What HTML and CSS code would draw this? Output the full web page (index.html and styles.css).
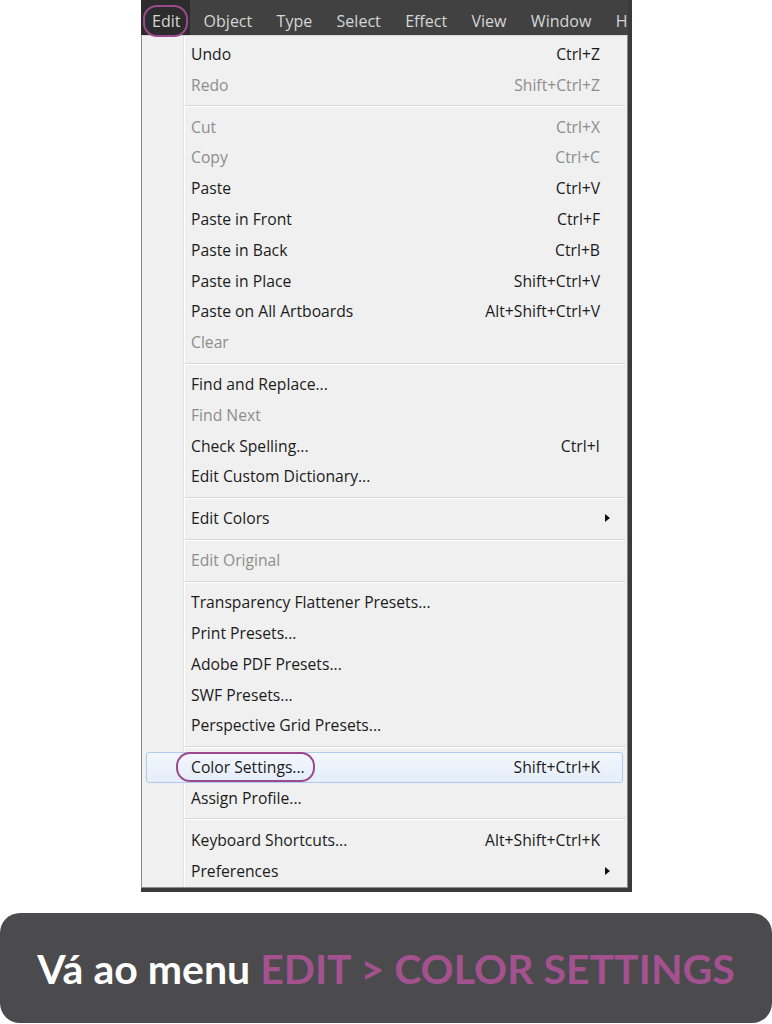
FILE: index.html
```html
<!DOCTYPE html>
<html>
<head>
    <meta charset="UTF-8">
    <title>Color Settings</title>
    <link rel="stylesheet" href="styles.css">
</head>
<body>
    <div class="shot">
        <div class="menubar">
            <span class="top-item active"><span class="ring">Edit</span></span>
            <span class="top-item">Object</span>
            <span class="top-item">Type</span>
            <span class="top-item">Select</span>
            <span class="top-item">Effect</span>
            <span class="top-item">View</span>
            <span class="top-item">Window</span>
            <span class="top-item">H</span>
        </div>

        <div class="menu">
            <div class="item"><span>Undo</span><span class="key">Ctrl+Z</span></div>
            <div class="item off"><span>Redo</span><span class="key">Shift+Ctrl+Z</span></div>
            <div class="sep"></div>
            <div class="item off"><span>Cut</span><span class="key">Ctrl+X</span></div>
            <div class="item off"><span>Copy</span><span class="key">Ctrl+C</span></div>
            <div class="item"><span>Paste</span><span class="key">Ctrl+V</span></div>
            <div class="item"><span>Paste in Front</span><span class="key">Ctrl+F</span></div>
            <div class="item"><span>Paste in Back</span><span class="key">Ctrl+B</span></div>
            <div class="item"><span>Paste in Place</span><span class="key">Shift+Ctrl+V</span></div>
            <div class="item"><span>Paste on All Artboards</span><span class="key">Alt+Shift+Ctrl+V</span></div>
            <div class="item off"><span>Clear</span></div>
            <div class="sep"></div>
            <div class="item"><span>Find and Replace...</span></div>
            <div class="item off"><span>Find Next</span></div>
            <div class="item"><span>Check Spelling...</span><span class="key">Ctrl+I</span></div>
            <div class="item"><span>Edit Custom Dictionary...</span></div>
            <div class="sep"></div>
            <div class="item"><span>Edit Colors</span><span class="key"></span><span class="arrow"></span></div>
            <div class="sep"></div>
            <div class="item off"><span>Edit Original</span></div>
            <div class="sep"></div>
            <div class="item"><span>Transparency Flattener Presets...</span></div>
            <div class="item"><span>Print Presets...</span></div>
            <div class="item"><span>Adobe PDF Presets...</span></div>
            <div class="item"><span>SWF Presets...</span></div>
            <div class="item"><span>Perspective Grid Presets...</span></div>
            <div class="sep"></div>
            <div class="item hover"><span class="ring">Color Settings...</span><span class="key">Shift+Ctrl+K</span></div>
            <div class="item"><span>Assign Profile...</span></div>
            <div class="sep"></div>
            <div class="item"><span>Keyboard Shortcuts...</span><span class="key">Alt+Shift+Ctrl+K</span></div>
            <div class="item"><span>Preferences</span><span class="key"></span><span class="arrow"></span></div>
        </div>
    </div>

    <div class="caption">
        Vá ao menu <span class="accent">EDIT &gt; COLOR SETTINGS</span>
    </div>
</body>
</html>
```

FILE: styles.css
```css
* {
    margin: 0;
    padding: 0;
    box-sizing: border-box;
}

body {
    background: #fff;
    font-family: 'Segoe UI', 'Open Sans', sans-serif;
}

.shot {
    width: 491px;
    margin-left: 141px;
    background: #3a3a3a;
    padding: 0 4px 4px 0;
    overflow: hidden;
}

.menubar {
    display: flex;
    height: 35px;
    align-items: stretch;
    background: #414141;
    white-space: nowrap;
    color: #d6d6d6;
    font-size: 16px;
}

.top-item {
    display: flex;
    align-items: center;
    padding: 7px 12.2px 0;
}

.top-item.active {
    background: #2c2c2c;
    padding: 7px 10px 0 11px;
    margin-right: 1px;
}

.ring {
    position: relative;
}

.ring::after {
    content: '';
    position: absolute;
    top: -5px;
    bottom: -5px;
    left: -9px;
    right: -8px;
    border: 2px solid #9b4a8d;
    border-radius: 14px;
}

.menu {
    border: 1px solid #8a8a8a;
    border-top-color: #d8d8d8;
    padding: 2.5px 2px 1px;
    background: linear-gradient(to right, transparent 41px, #e2e3e3 41px, #e2e3e3 42px, #fff 42px, #fff 43px, transparent 43px), #f0f0f0;
    font-size: 15.7px;
    color: #1b1b1b;
}

.item {
    display: flex;
    align-items: center;
    height: 30.8px;
    margin: 0 2px;
    padding-left: 44px;
    border: 1px solid transparent;
    border-radius: 3px;
}

.item span:first-child {
    flex: 1;
}

.key {
    padding-right: 22px;
}

.item.off {
    color: #8d8d8d;
}

.item.hover {
    border-color: #aecbf0;
    background: linear-gradient(#f3f7fd, #e4edf9);
}

.item.hover .ring {
    flex: none !important;
    margin-right: auto;
}

.item.hover .ring::after {
    top: -4px;
    bottom: -4px;
    left: -15px;
    right: -10px;
}

.arrow {
    width: 0;
    height: 0;
    border-left: 5px solid #111;
    border-top: 4px solid transparent;
    border-bottom: 4px solid transparent;
    margin-right: 12px;
    margin-left: -17px;
}

.sep {
    height: 11.1px;
    margin-left: 41px;
    background: linear-gradient(transparent 5px, #d7d7d7 5px, #d7d7d7 6px, #fff 6px, #fff 7px, transparent 7px);
}

.caption {
    height: 110px;
    margin-top: 21px;
    border-radius: 20px;
    background: #4b4b4d;
    color: #fff;
    font-family: 'Lato', sans-serif;
    font-weight: 700;
    font-size: 41px;
    line-height: 112px;
    text-align: center;
    white-space: nowrap;
}

.accent {
    color: #a3518f;
}
```
